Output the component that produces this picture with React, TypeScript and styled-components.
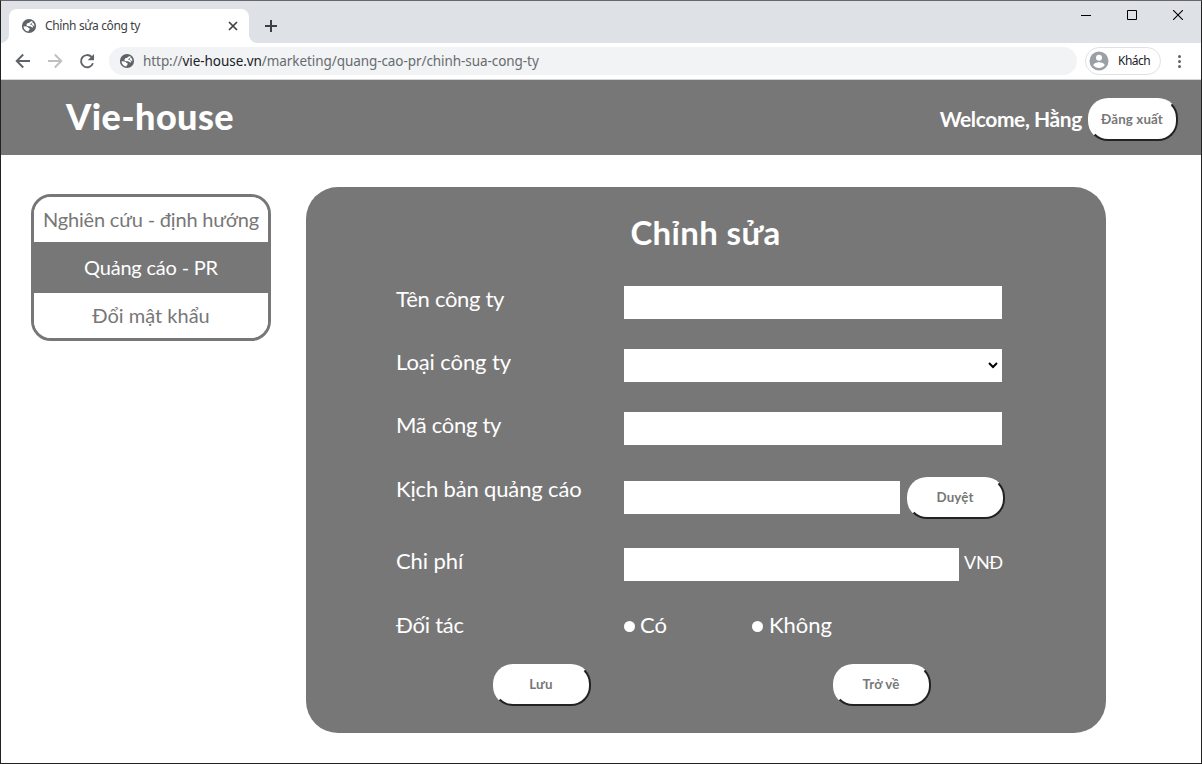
import React from "react";
import styled, { createGlobalStyle } from "styled-components";

const GREY = "#777777";

const GlobalStyle = createGlobalStyle`
  * { box-sizing: border-box; }
  body { margin: 0; background: #fff; }
  button, input, select { margin: 0; font-family: inherit; }
`;

const Window = styled.div`
  width: 1202px;
  height: 764px;
  display: flex;
  flex-direction: column;
  overflow: hidden;
  background: #fff;
  border: 1px solid #222;
  border-top-color: #66686c;
  font-family: Lato, "Liberation Sans", sans-serif;
`;

const TabStrip = styled.div`
  height: 42px;
  flex: none;
  display: flex;
  align-items: flex-end;
  background: #dee1e6;
  font-family: "Noto Sans", "Open Sans", sans-serif;
`;

const TabFoot = styled.span<{ $side: "left" | "right" }>`
  width: 8px;
  height: 8px;
  flex: none;
  background: radial-gradient(
    circle at ${(p) => (p.$side === "left" ? "0 0" : "100% 0")},
    #dee1e6 7.5px,
    #fff 8px
  );
`;

const Tab = styled.div`
  width: 240px;
  height: 34px;
  padding: 0 10px 0 12px;
  display: flex;
  align-items: center;
  border-radius: 8px 8px 0 0;
  background: #fff;
`;

const TabTitle = styled.span`
  flex: 1;
  margin: -1px 0 0 8px;
  font-size: 12px;
  letter-spacing: -0.36px;
  color: #3c4043;
  white-space: nowrap;
`;

const NewTab = styled.span`
  align-self: center;
  display: flex;
  margin: 8px 0 0 7px;
`;

const WindowControls = styled.div`
  align-self: flex-start;
  display: flex;
  gap: 36px;
  margin: 9px 18px 0 auto;
`;

const Toolbar = styled.div`
  height: 37px;
  flex: none;
  display: flex;
  align-items: center;
  padding: 0 13px 0 14px;
  border-bottom: 1px solid #d5d6d8;
  background: #fff;
  font-family: "Noto Sans", "Open Sans", sans-serif;
`;

const NavIcons = styled.div`
  display: flex;
  gap: 16px;
`;

const AddressBar = styled.div`
  width: 968px;
  height: 28px;
  margin-left: 14px;
  padding-left: 10px;
  display: flex;
  align-items: center;
  border-radius: 14px;
  background: #f1f3f4;
`;

const Url = styled.span`
  margin: -1px 0 0 8px;
  font-size: 13.5px;
  letter-spacing: -0.07px;
  color: #686b6f;
  white-space: nowrap;
  b { font-weight: 400; color: #202124; }
`;

const Profile = styled.div`
  width: 76px;
  height: 28px;
  margin-left: 8px;
  padding: 0 0 1px 3px;
  display: flex;
  align-items: center;
  gap: 9px;
  border: 1px solid #dfe1e5;
  border-radius: 14px;
  font-size: 12px;
  letter-spacing: -0.5px;
  color: #202124;
`;

const MenuDots = styled.span`
  margin-left: auto;
  display: flex;
`;

const Header = styled.header`
  height: 75px;
  flex: none;
  display: flex;
  align-items: center;
  padding: 0 23px 0 65px;
  background: ${GREY};
  color: #fff;
`;

const Brand = styled.h1`
  margin: -4px 0 0;
  font-size: 36px;
  font-weight: 900;
  line-height: 44px;
  letter-spacing: 0.42px;
`;

const Welcome = styled.span`
  margin: 2px 6px 0 auto;
  font-size: 21px;
  font-weight: 700;
  letter-spacing: -0.4px;
`;

const PillButton = styled.button<{ $width: number; $height?: number }>`
  width: ${(p) => p.$width}px;
  height: ${(p) => p.$height ?? 42}px;
  flex: none;
  padding: 0 2px ${(p) => (p.$height ? 1 : 2)}px 0;
  border: 2px solid;
  border-color: #fff #222 #222 #fff;
  border-radius: 20px;
  background: #fff;
  color: ${GREY};
  font-size: 13.333px;
  font-weight: 700;
  letter-spacing: 0.12px;
`;

const LogoutWrap = styled.div`
  margin-top: 3px;
  display: flex;
`;

const Main = styled.main`
  flex: 1;
  display: flex;
  align-items: flex-start;
  gap: 35px;
  padding: 32px 0 0 30px;
`;

const SideMenu = styled.nav`
  width: 240px;
  height: 147px;
  margin-top: 7px;
  display: flex;
  flex-direction: column;
  overflow: hidden;
  border: 3px solid ${GREY};
  border-radius: 20px;
`;

const SideItem = styled.a<{ $active?: boolean; $tracking?: number }>`
  height: ${(p) => (p.$active ? 51 : 45)}px;
  padding-bottom: 2px;
  display: flex;
  align-items: center;
  justify-content: center;
  background: ${(p) => (p.$active ? GREY : "#fff")};
  color: ${(p) => (p.$active ? "#fff" : GREY)};
  font-size: 20px;
  letter-spacing: ${(p) => p.$tracking ?? 0}px;
  white-space: nowrap;
`;

const Panel = styled.section`
  width: 800px;
  height: 546px;
  padding: 25px 101px 0 90px;
  border-radius: 32px;
  background: ${GREY};
  color: #fff;
`;

const PanelTitle = styled.h2`
  margin: 0 0 34px 10px;
  font-size: 33px;
  line-height: 40px;
  font-weight: 700;
  letter-spacing: 0.35px;
  text-align: center;
`;

const FormRow = styled.div<{ $height: number }>`
  height: ${(p) => p.$height}px;
  display: grid;
  grid-template-columns: 228px 1fr;
  align-items: start;
`;

const Label = styled.label<{ $tracking?: number }>`
  font-size: 22px;
  line-height: 26px;
  letter-spacing: ${(p) => p.$tracking ?? -0.2}px;
  white-space: nowrap;
`;

const Field = styled.div<{ $gap?: number; $top?: number }>`
  display: flex;
  align-items: center;
  gap: ${(p) => p.$gap ?? 0}px;
  padding-top: ${(p) => p.$top ?? 0}px;
`;

const TextInput = styled.input<{ $width: number; $lift?: number }>`
  width: ${(p) => p.$width}px;
  height: 33px;
  flex: none;
  margin-bottom: ${(p) => p.$lift ?? 0}px;
  padding: 0 4px;
  border: 0;
  border-radius: 0;
  background: #fff;
`;

const SelectBox = styled.div`
  width: 378px;
  height: 33px;
  padding: 0 4px 2px 0;
  display: flex;
  align-items: center;
  justify-content: flex-end;
  background: #fff;
`;

const Unit = styled.span`
  padding-bottom: 5px;
  font-size: 18px;
  line-height: 28px;
  letter-spacing: -0.3px;
`;

const Choice = styled.label<{ $width?: number; $gap: number }>`
  width: ${(p) => (p.$width ? p.$width + "px" : "auto")};
  display: flex;
  align-items: center;
  gap: ${(p) => p.$gap}px;
  font-size: 22px;
  line-height: 26px;
`;

const Radio = styled.span`
  width: 11px;
  height: 11px;
  margin-top: 2px;
  border-radius: 50%;
  background: #fff;
`;

const Actions = styled.div`
  display: flex;
  gap: 242px;
  padding-left: 97px;
`;

const Globe = () => (
  <svg width="16" height="16" viewBox="0 0 16 16">
    <circle cx="8" cy="8" r="7.1" fill="#5f6368" />
    <path
      d="M10.800 3.300C10.800 4.800 9.400 4.400 8.900 5.200 8.300 6.200 6.300 5.500 6.300 6.700c0 .9 1.500.5 2.800.6 1.700.2 2.300 1.300 1.900 2.100"
      fill="none"
      stroke="#fff"
      strokeWidth="1.700"
    />
    <path d="M2.600 8.200l3 .2c1.200.1 1.500.9 1.700 1.400.4.5 1.700.3 1.500 1.200-.2.900-1.300.7-1.300 2.400C4.600 13.200 2.500 11 2.600 8.200Z" fill="#fff" />
    <path d="M11.500 4.200c1.300 1 2 2.400 1.900 4.200l-1.400-.9c-.3-.6-.9-1-1.700-1.200Z" fill="#fff" />
  </svg>
);

const Stroke = ({ d, color = "#5f6368", size = 16, width = 1.9 }: {
  d: string; color?: string; size?: number; width?: number;
}) => (
  <svg width={size} height={size} viewBox={`0 0 ${size} ${size}`} fill="none" stroke={color} strokeWidth={width}>
    <path d={d} />
  </svg>
);

export default function App() {
  return (
    <>
      <GlobalStyle />
      <Window>
        <TabStrip>
          <TabFoot $side="left" />
          <Tab>
            <Globe />
            <TabTitle>Chỉnh sửa công ty</TabTitle>
            <Stroke size={12} color="#3c4043" width={1.7} d="M2 2l8 8M10 2l-8 8" />
          </Tab>
          <TabFoot $side="right" />
          <NewTab>
            <Stroke size={14} color="#3c4043" width={2} d="M7 1v12M1 7h12" />
          </NewTab>
          <WindowControls>
            <Stroke size={10} color="#000" width={1} d="M0 5.5h10" />
            <Stroke size={10} color="#000" width={1} d="M.5.5h9v9h-9z" />
            <Stroke size={10} color="#000" width={1.1} d="M0 0l10 10M10 0L0 10" />
          </WindowControls>
        </TabStrip>

        <Toolbar>
          <NavIcons>
            <Stroke d="M15 8H2M8.200 1.500L1.700 8l6.500 6.500" />
            <Stroke color="#bdbfc2" d="M1 8h13M7.800 1.500L14.300 8l-6.500 6.500" />
            <svg width="16" height="16" viewBox="0 0 16 16">
              <path d="M13.900 10.200A6.100 6.100 0 1 1 12.600 4" fill="none" stroke="#5f6368" strokeWidth="1.900" />
              <path d="M15 .9v6.300H8.700z" fill="#5f6368" />
            </svg>
          </NavIcons>
          <AddressBar>
            <Globe />
            <Url>http://<b>vie-house.vn</b>/marketing/quang-cao-pr/chinh-sua-cong-ty</Url>
          </AddressBar>
          <Profile>
            <svg width="20" height="20" viewBox="0 0 20 20">
              <circle cx="10" cy="10" r="9.500" fill="#9aa0a6" />
              <circle cx="10" cy="6.700" r="3" fill="#fff" />
              <path d="M4.300 14.300c0-2 3.600-3 5.700-3s5.700 1 5.700 3c-1.200 1.600-3.300 2.600-5.700 2.600s-4.500-1-5.700-2.600Z" fill="#fff" />
            </svg>
            Khách
          </Profile>
          <MenuDots>
            <svg width="16" height="16" viewBox="0 0 16 16" fill="#5f6368">
              <circle cx="7.500" cy="3.500" r="1.500" />
              <circle cx="7.500" cy="8.500" r="1.500" />
              <circle cx="7.500" cy="13.500" r="1.500" />
            </svg>
          </MenuDots>
        </Toolbar>

        <Header>
          <Brand>Vie-house</Brand>
          <Welcome>Welcome, Hằng</Welcome>
          <LogoutWrap>
            <PillButton $width={90} $height={43}>Đăng xuất</PillButton>
          </LogoutWrap>
        </Header>

        <Main>
          <SideMenu>
            <SideItem $tracking={-0.18}>Nghiên cứu - định hướng</SideItem>
            <SideItem $active $tracking={-0.2}>Quảng cáo - PR</SideItem>
            <SideItem>Đổi mật khẩu</SideItem>
          </SideMenu>

          <Panel>
            <PanelTitle>Chỉnh sửa</PanelTitle>
            <FormRow $height={63}>
              <Label $tracking={-0.3}>Tên công ty</Label>
              <Field><TextInput $width={378} /></Field>
            </FormRow>
            <FormRow $height={63}>
              <Label $tracking={-0.1}>Loại công ty</Label>
              <Field>
                <SelectBox>
                  <Stroke size={10} color="#000" width={2} d="M1 3l4 4 4-4" />
                </SelectBox>
              </Field>
            </FormRow>
            <FormRow $height={64}>
              <Label $tracking={-0.3}>Mã công ty</Label>
              <Field><TextInput $width={378} /></Field>
            </FormRow>
            <FormRow $height={72}>
              <Label $tracking={-0.15}>Kịch bản quảng cáo</Label>
              <Field $gap={7} $top={1}>
                <TextInput $width={276} $lift={2} />
                <PillButton $width={98}>Duyệt</PillButton>
              </Field>
            </FormRow>
            <FormRow $height={64}>
              <Label $tracking={-0.1}>Chi phí</Label>
              <Field $gap={5}>
                <TextInput $width={335} />
                <Unit>VNĐ</Unit>
              </Field>
            </FormRow>
            <FormRow $height={52}>
              <Label $tracking={-0.25}>Đối tác</Label>
              <Field>
                <Choice $width={128} $gap={5}><Radio />Có</Choice>
                <Choice $gap={6}><Radio />Không</Choice>
              </Field>
            </FormRow>
            <Actions>
              <PillButton $width={98}>Lưu</PillButton>
              <PillButton $width={98}>Trở về</PillButton>
            </Actions>
          </Panel>
        </Main>
      </Window>
    </>
  );
}
